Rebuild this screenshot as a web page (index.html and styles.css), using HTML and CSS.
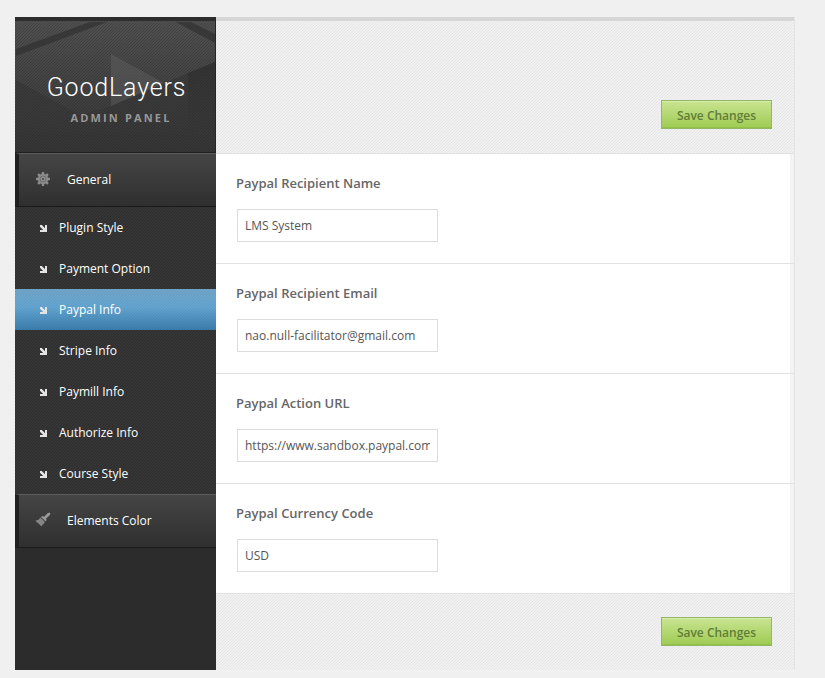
FILE: index.html
```html
<!DOCTYPE html>
<html lang="en">
<head>
<meta charset="utf-8">
<title>GoodLayers Admin Panel</title>
<link rel="stylesheet" href="styles.css">
</head>
<body>
<div class="panel">
  <aside class="sidebar">
    <header class="brand">
      <svg class="brand-art" width="201" height="132" viewBox="0 0 201 132" aria-hidden="true">
        <defs>
          <linearGradient id="fade" x1="0" y1="0" x2="0" y2="1">
            <stop offset="0" stop-color="#202020" stop-opacity=".3"/>
            <stop offset="1" stop-color="#202020" stop-opacity="0"/>
          </linearGradient>
        </defs>
        <path d="M1 28L75 1H92L1 35Z" fill="#303030" opacity=".7"/>
        <path d="M161 1H176L200 13V22Z" fill="#303030" opacity=".7"/>
        <path d="M1 59L65 94L96 85L149 62L200 41V132H1Z" fill="url(#fade)"/>
        <path d="M96 33L149 62L96 85Z" fill="#777" opacity=".27"/>
        <path d="M173 52L200 41V106L173 115Z" fill="url(#fade)"/>
      </svg>
      <h1>GoodLayers</h1>
      <p>ADMIN PANEL</p>
    </header>
    <nav>
      <a class="group">
        <svg class="group-icon" width="14" height="14" viewBox="0 0 14 14" aria-hidden="true">
          <path fill="#8c8c8c" d="M6 0h2l.4 2 1.200.5L11.300 1.300l1.400 1.400L11.500 4.400l.5 1.200 2 .4v2l-2 .4-.5 1.200 1.200 1.700-1.400 1.400-1.700-1.200-1.200.5-.4 2H6l-.4-2-1.200-.5-1.700 1.200-1.400-1.400 1.200-1.700L2 8.400 0 8V6l2-.4.500-1.200L1.300 2.700l1.400-1.400 1.700 1.200L5.600 2Z"/>
          <circle cx="7" cy="7" r="3.300" fill="#6c6c6c"/>
          <circle cx="7" cy="7" r="1.900" fill="#595959" stroke="#a0a0a0"/>
        </svg>
        <span>General</span>
      </a>
      <div class="items">
        <a><i class="arrow"></i>Plugin Style</a>
        <a><i class="arrow"></i>Payment Option</a>
        <a class="active"><i class="arrow"></i>Paypal Info</a>
        <a><i class="arrow"></i>Stripe Info</a>
        <a><i class="arrow"></i>Paymill Info</a>
        <a><i class="arrow"></i>Authorize Info</a>
        <a><i class="arrow"></i>Course Style</a>
      </div>
      <a class="group">
        <svg class="group-icon brush" width="16" height="15" viewBox="0 0 16 15" aria-hidden="true">
          <path fill="#999" d="M9.200 4.800L12.500 1.200L14.400.500L15.400 1.500L14.700 3.200L11.100 6.600L11.600 8.200L10.500 9.300L6 5L7.200 4Z"/>
          <path fill="#858585" d="M5.500 5.500L10 9.900L6.500 14.300L4.900 12.900L4.300 11.900L3.600 12L3 10.700L1.800 10.500L.5 8.500L3.200 8Z"/>
        </svg>
        <span>Elements Color</span>
      </a>
    </nav>
  </aside>
  <form class="content">
    <div class="bar top"><button type="button">Save Changes</button></div>
    <div class="fields">
      <div class="field"><label for="name">Paypal Recipient Name</label><input id="name" type="text" value="LMS System"></div>
      <div class="field"><label for="email">Paypal Recipient Email</label><input id="email" type="text" value="nao.null-facilitator@gmail.com"></div>
      <div class="field"><label for="url">Paypal Action URL</label><input id="url" type="text" value="https://www.sandbox.paypal.com/cgi-bin/webscr"></div>
      <div class="field"><label for="code">Paypal Currency Code</label><input id="code" type="text" value="USD"></div>
    </div>
    <div class="bar bottom"><button type="button">Save Changes</button></div>
  </form>
</div>
</body>
</html>
```
FILE: styles.css
```css
* { box-sizing: border-box; }
body {
  margin: 0;
  padding: 17px 0 0 15px;
  background: #f0f0f0;
  font-family: "Open Sans", sans-serif;
  font-size: 12px;
  overflow: hidden;
}
.panel { display: flex; width: 780px; height: 653px; }
.sidebar { width: 201px; background: #2c2c2c; }
.brand {
  position: relative;
  height: 136px;
  border-top: 4px solid #2d2d2d;
  border-right: 1px solid #262626;
  border-bottom: 1px solid #202020;
  background:
    linear-gradient(135deg, transparent 45%, rgba(0,0,0,.17) 45% 55%, transparent 55%) 0 0 / 3px 3px,
    linear-gradient(#505050, #363636);
  text-align: center;
}
.brand-art { position: absolute; left: 0; top: 0; }
.brand h1 {
  position: relative;
  margin: 0;
  padding: 51px 0 0 3px;
  color: #fff;
  font: 300 25px/32px Roboto, sans-serif;
  letter-spacing: .85px;
}
.brand p {
  position: relative;
  margin: 6px 0 0;
  padding-left: 12px;
  color: #989898;
  font-size: 11px;
  font-weight: 700;
  line-height: 16px;
  letter-spacing: 2.15px;
}
.group {
  display: flex;
  align-items: center;
  height: 54px;
  padding: 0 0 2px 17px;
  border-left: 4px solid #202020;
  border-top: 1px solid #5b5b5b;
  border-bottom: 1px solid #1b1b1b;
  background: linear-gradient(#454545, #2f2f2f);
  color: #fff;
}
.group-icon { flex: none; margin-right: 17px; }
.group-icon.brush { margin: -1px 16px 0 -1px; }
.items {
  background:
    linear-gradient(135deg, transparent 45%, #2c2c2c 45% 55%, transparent 55%) 0 0 / 3px 3px,
    #363636;
}
.items a {
  display: flex;
  align-items: center;
  height: 41px;
  padding-left: 25px;
  color: #fff;
}
.items .active {
  background:
    linear-gradient(135deg, transparent 45%, rgba(40,80,110,.1) 45% 55%, transparent 55%) 0 0 / 3px 3px,
    linear-gradient(#72a6c8, #63a5d1 45%, #3a7cab);
}
.arrow {
  width: 7px;
  height: 7px;
  margin: 2px 12px 0 0;
  background: #e4e4e4;
  clip-path: polygon(0 0, 1.800px 0, 5px 3.200px, 5px 0, 7px 0, 7px 7px, 0 7px, 0 5px, 3.200px 5px, 0 1.800px);
}
.content {
  display: flex;
  flex-direction: column;
  width: 579px;
  border-right: 1px solid #e4e4e7;
}
.bar {
  display: flex;
  justify-content: flex-end;
  padding-right: 22px;
  background:
    linear-gradient(135deg, transparent 45%, #e5e5e5 45% 55%, transparent 55%) 0 0 / 3px 3px,
    #f1f1f1;
}
.bar.top {
  height: 137px;
  padding-top: 79px;
  border-top: 4px solid #d6d6d6;
  border-bottom: 1px solid #e2e2e4;
}
.bar.bottom { flex: 1; padding-top: 23px; }
.fields { background: #fff; }
.field {
  display: flex;
  flex-direction: column;
  align-items: flex-start;
  height: 110px;
  padding: 20px 0 0 20px;
  border-bottom: 1px solid #e2e2e2;
  background: linear-gradient(#f3f3f3, #f3f3f3) right / 4px 100% no-repeat;
}
.field label { color: #666; font-size: 13px; font-weight: 600; line-height: 18px; }
.field input {
  width: 201px;
  height: 33px;
  margin: 17px 0 0 1px;
  padding: 0 7px;
  border: 1px solid #dcdcdc;
  background: #fff;
  color: #555;
  font: 12px "Open Sans", sans-serif;
}
button {
  width: 111px;
  height: 29px;
  padding: 2px 0 0;
  border: 1px solid #93b865;
  background: linear-gradient(#c9e491, #9fcb53);
  box-shadow: inset 0 1px #d7eaaf, inset 0 -1px #93c047;
  color: #617d38;
  font: 600 12px "Open Sans", sans-serif;
}
```
